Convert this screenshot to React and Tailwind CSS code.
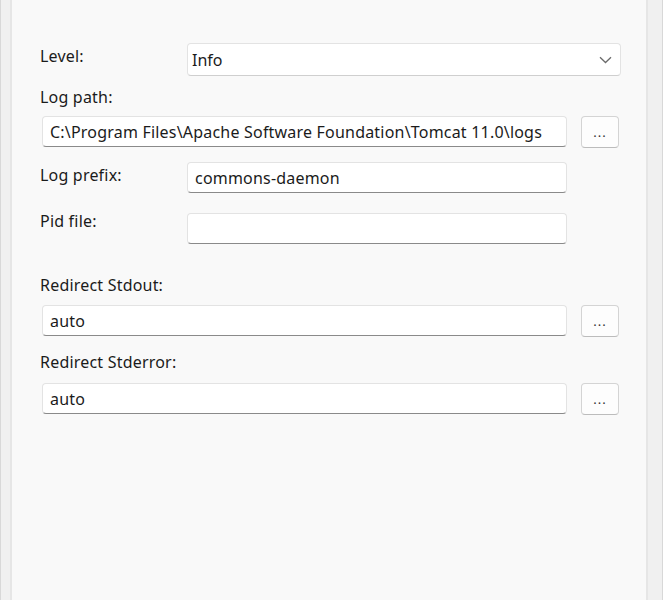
import React from "react";

const font = { fontFamily: '"Noto Sans", "Open Sans", sans-serif' };

const Field = ({ value = "", className = "" }) => (
  <div
    className={`flex h-[31px] items-center rounded-[4px] border border-[#e3e3e3] border-b-[#8a8a8a] bg-white pl-[7px] text-[16px] tracking-[0.2px] text-[#1b1b1b] ${className}`}
  >
    {value}
  </div>
);

const Browse = () => (
  <button className="flex h-[32px] w-[38px] items-end justify-center rounded-[4px] border border-[#d4d4d4] border-b-[#bcbcbc] bg-[#fdfdfd] pb-[8px] text-[13px] leading-none tracking-[1px] text-[#333]">
    ...
  </button>
);

const Label = ({ children, className = "" }) => (
  <div className={`text-[16px] leading-[20px] tracking-[0.2px] text-[#1b1b1b] ${className}`}>{children}</div>
);

export default function App() {
  return (
    <div className="flex h-[600px] w-[663px] overflow-hidden bg-[#f0f0f0]" style={font}>
      {/* left strip */}
      <div className="h-full w-[10px] border-l border-[#d8d8d8] bg-[#f0f0f0]" />
      {/* panel */}
      <div className="h-full w-[638px] border-x-2 border-[#e6e6e6] bg-[#f9f9f9] pl-[28px] pt-[43px]">
        {/* Level */}
        <div className="flex">
          <Label className="mt-[3px] w-[147px]">Level:</Label>
          <div className="flex h-[33px] w-[434px] items-center justify-between rounded-[4px] border border-[#e3e3e3] border-b-[#cfcfcf] bg-white pl-[4px] pr-[8px] text-[16px] text-[#1b1b1b]">
            <span>Info</span>
            <svg width="13" height="8" viewBox="0 0 13 8" fill="none">
              <path d="M1 1.2L6.5 6.5L12 1.2" stroke="#6b6b6b" strokeWidth="1.3" />
            </svg>
          </div>
        </div>

        {/* Log path */}
        <Label className="mt-[11px]">Log path:</Label>
        <div className="ml-[2px] mt-[9px] flex items-start gap-[14px]">
          <Field className="w-[525px]" value="C:\Program Files\Apache Software Foundation\Tomcat 11.0\logs" />
          <Browse />
        </div>

        {/* Log prefix */}
        <div className="mt-[14px] flex">
          <Label className="mt-[3px] w-[147px]">Log prefix:</Label>
          <Field className="w-[380px]" value="commons-daemon" />
        </div>

        {/* Pid file */}
        <div className="mt-[20px] flex">
          <Label className="-mt-[2px] w-[147px]">Pid file:</Label>
          <Field className="w-[380px]" />
        </div>

        {/* Redirect Stdout */}
        <Label className="mt-[31px]">Redirect Stdout:</Label>
        <div className="ml-[2px] mt-[10px] flex items-start gap-[14px]">
          <Field className="w-[525px]" value="auto" />
          <Browse />
        </div>

        {/* Redirect Stderror */}
        <Label className="mt-[15px]">Redirect Stderror:</Label>
        <div className="ml-[2px] mt-[11px] flex items-start gap-[14px]">
          <Field className="w-[525px]" value="auto" />
          <Browse />
        </div>
      </div>
      {/* right strip */}
      <div className="h-full flex-1 border-r border-[#d8d8d8] bg-[#f0f0f0]" />
    </div>
  );
}
